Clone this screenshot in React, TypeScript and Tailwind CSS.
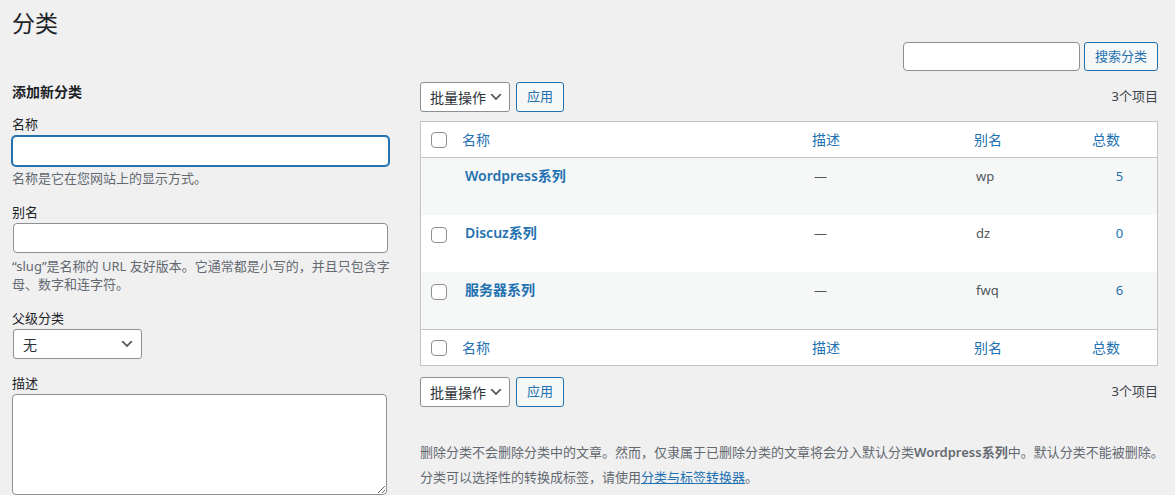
import React from "react";

const Chevron = () => (
  <svg width="16" height="16" viewBox="0 0 20 20" className="shrink-0">
    <path d="M5 6l5 5 5-5 2 1-7 7-7-7 2-1z" fill="#50575e" />
  </svg>
);

const Checkbox = () => (
  <div className="h-[16px] w-[16px] rounded-[4px] border border-[#8c8f94] bg-white" />
);

function BulkBar() {
  return (
    <div className="flex h-[30px] items-center">
      <div className="flex h-[30px] w-[90px] items-center justify-between rounded-[3px] border border-[#8c8f94] bg-white pl-[9px] pr-[5px] text-[14px] text-[#2c3338]">
        <span>批量操作</span>
        <Chevron />
      </div>
      <button className="ml-[6px] h-[30px] w-[48px] rounded-[3px] border border-[#2271b1] bg-[#f6f7f7] text-[13px] text-[#2271b1]">
        应用
      </button>
      <div className="ml-auto text-[13px] text-[#3c434a]">3个项目</div>
    </div>
  );
}

function HeadRow({ bottom }: { bottom?: boolean }) {
  return (
    <div
      className={
        "grid h-[36px] grid-cols-[31px_350px_162px_118px_75px] items-center bg-white text-[14px] text-[#2271b1] " +
        (bottom ? "border-t border-[#c3c4c7]" : "border-b border-[#c3c4c7]")
      }
    >
      <div className="pl-[10px]">
        <Checkbox />
      </div>
      <div className="pl-[10px]">名称</div>
      <div className="pl-[10px]">描述</div>
      <div className="pl-[10px]">别名</div>
      <div className="pl-[10px]">总数</div>
    </div>
  );
}

const rows = [
  { name: "Wordpress系列", slug: "wp", count: "5", cb: false, alt: true },
  { name: "Discuz系列", slug: "dz", count: "0", cb: true, alt: false },
  { name: "服务器系列", slug: "fwq", count: "6", cb: true, alt: true },
];

export default function App() {
  return (
    <div className="h-[495px] w-full overflow-hidden bg-[#f0f0f1] pl-[12px] pr-[17px] font-['Noto_Sans','Noto_Sans_CJK_SC',sans-serif] text-[13px] text-[#3c434a]">
      <h1 className="pt-[8px] text-[23px] leading-[30px] font-normal text-[#1d2327]">分类</h1>
      <div className="mt-[4px] flex justify-end">
        <div className="h-[29px] w-[177px] rounded-[4px] border border-[#8c8f94] bg-white" />
        <button className="ml-[4px] h-[29px] w-[74px] rounded-[3px] border border-[#2271b1] bg-[#f6f7f7] text-[13px] text-[#2271b1]">
          搜索分类
        </button>
      </div>
      <div className="mt-[11px] flex">
        {/* left column */}
        <div className="w-[377px] shrink-0">
          <h2 className="mt-[1px] text-[14px] leading-[18px] font-semibold text-[#1d2327]">添加新分类</h2>
          <div className="mt-[14px] leading-[18px] text-[#1d2327]">名称</div>
          <div className="mt-[3px] h-[30px] w-[377px] rounded-[4px] border border-[#2271b1] bg-white shadow-[0_0_0_1px_#2271b1]" />
          <div className="mt-[3px] leading-[18px] text-[#646970]">名称是它在您网站上的显示方式。</div>
          <div className="mt-[16px] leading-[18px] text-[#1d2327]">别名</div>
          <div className="ml-[1px] mt-[2px] h-[30px] w-[375px] rounded-[4px] border border-[#8c8f94] bg-white" />
          <div className="mt-[4px] whitespace-nowrap leading-[18px] text-[#646970]">
            “slug”是名称的 URL 友好版本。它通常都是小写的，并且只包含字
            <br />
            母、数字和连字符。
          </div>
          <div className="mt-[16px] leading-[18px] text-[#1d2327]">父级分类</div>
          <div className="ml-[1px] mt-[2px] flex h-[30px] w-[129px] items-center justify-between rounded-[3px] border border-[#8c8f94] bg-white pl-[9px] pr-[6px] text-[14px] text-[#2c3338]">
            <span>无</span>
            <Chevron />
          </div>
          <div className="mt-[15px] leading-[18px] text-[#1d2327]">描述</div>
          <textarea className="mt-[2px] block h-[101px] w-[375px] rounded-[4px] border border-[#8c8f94] bg-white outline-none" />
        </div>
        {/* right column */}
        <div className="ml-[31px] w-[738px] shrink-0">
          <BulkBar />
          <div className="mt-[9px] border border-[#c3c4c7] bg-white">
            <HeadRow />
            {rows.map((r) => (
              <div
                key={r.slug}
                className={
                  "grid h-[57px] grid-cols-[31px_350px_162px_118px_75px] items-start " +
                  (r.alt ? "bg-[#f6f7f7]" : "bg-white")
                }
              >
                <div className="pl-[10px] pt-[12px]">{r.cb ? <Checkbox /> : null}</div>
                <div className="pl-[13px] pt-[8px] text-[14px] leading-[20px] font-semibold text-[#2271b1]">{r.name}</div>
                <div className="pl-[12px] pt-[8px] leading-[20px] text-[#50575e]">—</div>
                <div className="pl-[12px] pt-[8px] leading-[20px] text-[#50575e]">{r.slug}</div>
                <div className="pt-[8px] text-center leading-[20px] text-[#2271b1]">{r.count}</div>
              </div>
            ))}
            <HeadRow bottom />
          </div>
          <div className="mt-[11px]">
            <BulkBar />
          </div>
          <div className="mt-[33px] whitespace-nowrap leading-[25px] text-[#646970]">
            <p>
              删除分类不会删除分类中的文章。然而，仅隶属于已删除分类的文章将会分入默认分类
              <strong className="font-semibold">Wordpress系列</strong>中。默认分类不能被删除。
            </p>
            <p>
              分类可以选择性的转换成标签，请使用
              <a className="text-[#2271b1] underline">分类与标签转换器</a>。
            </p>
          </div>
        </div>
      </div>
    </div>
  );
}
